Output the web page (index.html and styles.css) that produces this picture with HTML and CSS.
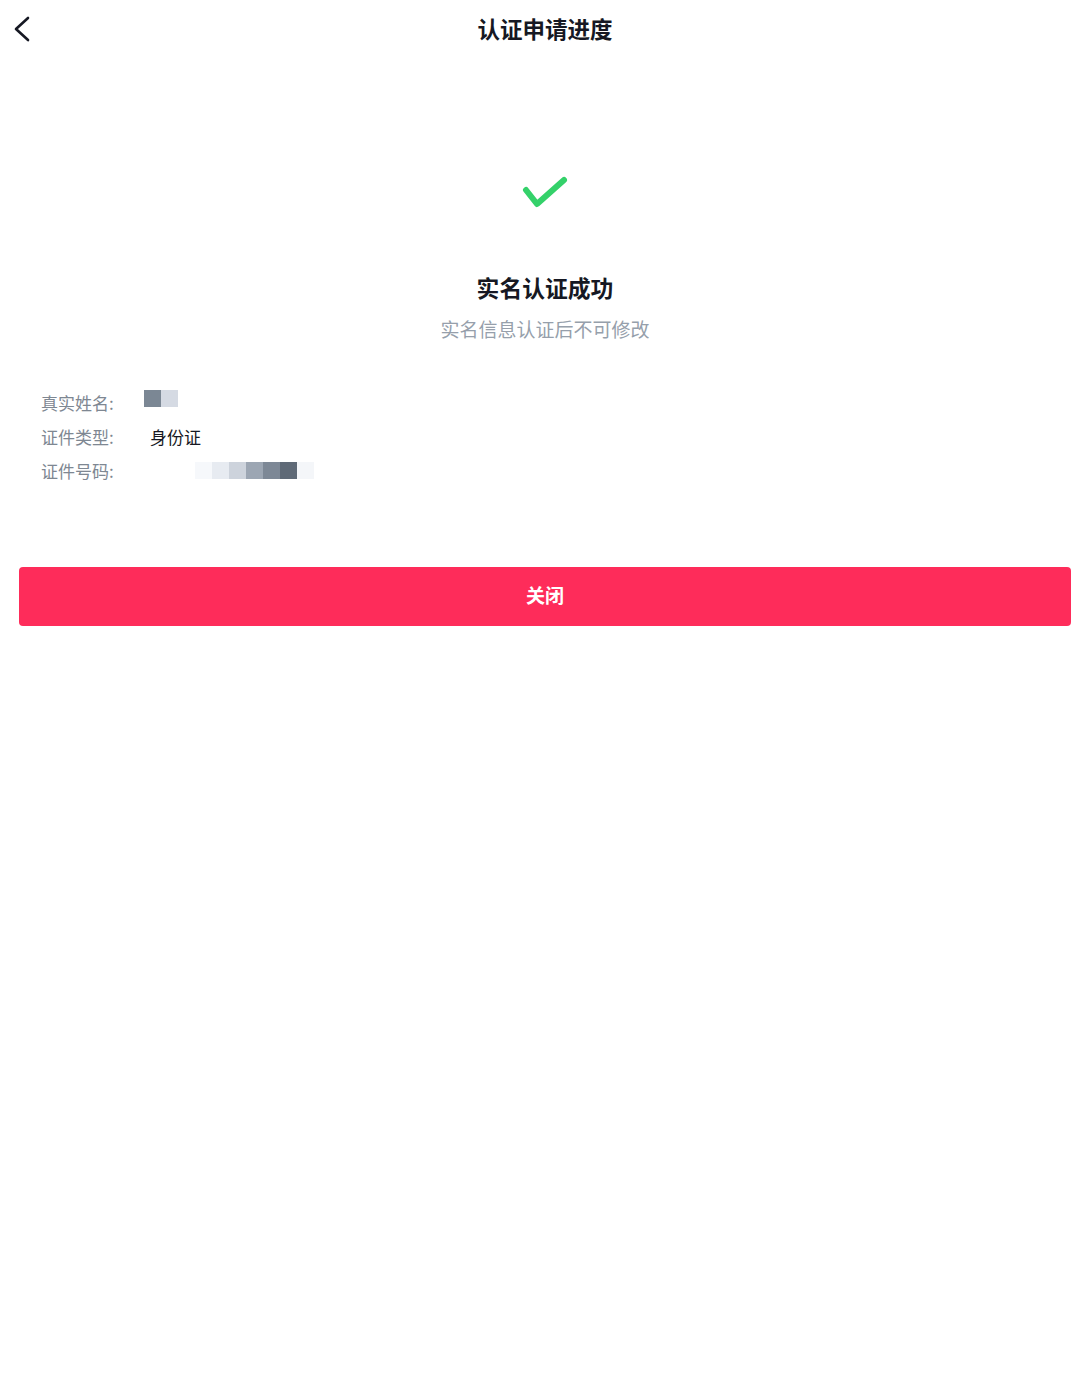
FILE: index.html
```html
<!DOCTYPE html>
<html lang="zh-CN">
<head>
<meta charset="utf-8">
<title>认证申请进度</title>
<link rel="stylesheet" href="styles.css">
</head>
<body>
<div class="page">
  <header class="header">
    <div class="back">
      <svg width="20" height="28" viewBox="0 0 20 28"><polyline points="16,3 4,14 16,25" fill="none" stroke="#161823" stroke-width="2.6" stroke-linecap="round" stroke-linejoin="round"/></svg>
    </div>
    <h1 class="title">认证申请进度</h1>
    <div class="spacer"></div>
  </header>
  <main class="content">
    <div class="status">
      <svg class="check" width="48" height="36" viewBox="0 0 48 36"><polyline points="5,16 16,30 43,6" fill="none" stroke="#34D16A" stroke-width="6" stroke-linecap="round" stroke-linejoin="round"/></svg>
      <div class="status-title">实名认证成功</div>
      <div class="status-sub">实名信息认证后不可修改</div>
    </div>
    <div class="info">
      <div class="row">
        <span class="label">真实姓名:</span>
        <span class="value"><span class="blur name-blur"><i style="background:#7b8794"></i><i style="background:#d5dae3"></i></span></span>
      </div>
      <div class="row">
        <span class="label">证件类型:</span>
        <span class="value text">身份证</span>
      </div>
      <div class="row">
        <span class="label">证件号码:</span>
        <span class="value"><span class="blur num-blur"><i style="background:#f6f8fb"></i><i style="background:#e7ebf1"></i><i style="background:#cdd3dc"></i><i style="background:#9ca6b3"></i><i style="background:#7d8896"></i><i style="background:#5f6a77"></i><i style="background:#f4f6f9"></i></span></span>
      </div>
    </div>
    <button class="close-btn">关闭</button>
  </main>
</div>
</body>
</html>
```

FILE: styles.css
```css
html, body {
  margin: 0;
  padding: 0;
  background: #ffffff;
}
body {
  font-family: "Noto Sans CJK SC", "Noto Sans", sans-serif;
  color: #161823;
}
.page {
  width: 1080px;
  padding-left: 10px;
  box-sizing: border-box;
}
.header {
  height: 58px;
  display: grid;
  grid-template-columns: 1fr auto 1fr;
  align-items: center;
}
.back {
  display: flex;
  align-items: center;
  margin-left: 2px;
}
.back svg {
  display: block;
}
.title {
  margin: 0 0 3px 0;
  font-size: 22.5px;
  font-weight: 700;
  line-height: 30px;
  color: #161823;
}
.content {
  display: flex;
  flex-direction: column;
}
.status {
  display: flex;
  flex-direction: column;
  align-items: center;
}
.check {
  display: block;
  margin-top: 116px;
}
.status-title {
  margin-top: 63px;
  font-size: 22.8px;
  font-weight: 700;
  line-height: 30px;
  color: #161823;
}
.status-sub {
  margin-top: 12px;
  font-size: 19px;
  line-height: 28px;
  color: #969fab;
}
.info {
  margin-top: 42px;
  padding-left: 31px;
  display: flex;
  flex-direction: column;
}
.row {
  height: 34px;
  display: flex;
  align-items: center;
}
.label {
  width: 103px;
  font-size: 17px;
  color: #7e8792;
  white-space: nowrap;
}
.value {
  display: flex;
  align-items: center;
}
.value.text {
  padding-left: 6px;
  font-size: 17px;
  color: #161823;
}
.blur {
  display: flex;
}
.blur i {
  display: block;
  width: 17px;
  height: 17px;
}
.name-blur {
  margin-top: -7px;
}
.num-blur {
  margin-left: 51px;
  margin-top: 0;
}
.close-btn {
  margin: 80px 9px 0 9px;
  height: 59px;
  border: none;
  border-radius: 4px;
  background: #fe2c5a;
  color: #ffffff;
  font-family: "Noto Sans CJK SC", "Noto Sans", sans-serif;
  font-size: 19px;
  font-weight: 700;
  line-height: 24px;
  padding: 0 0 4px 0;
}
```
